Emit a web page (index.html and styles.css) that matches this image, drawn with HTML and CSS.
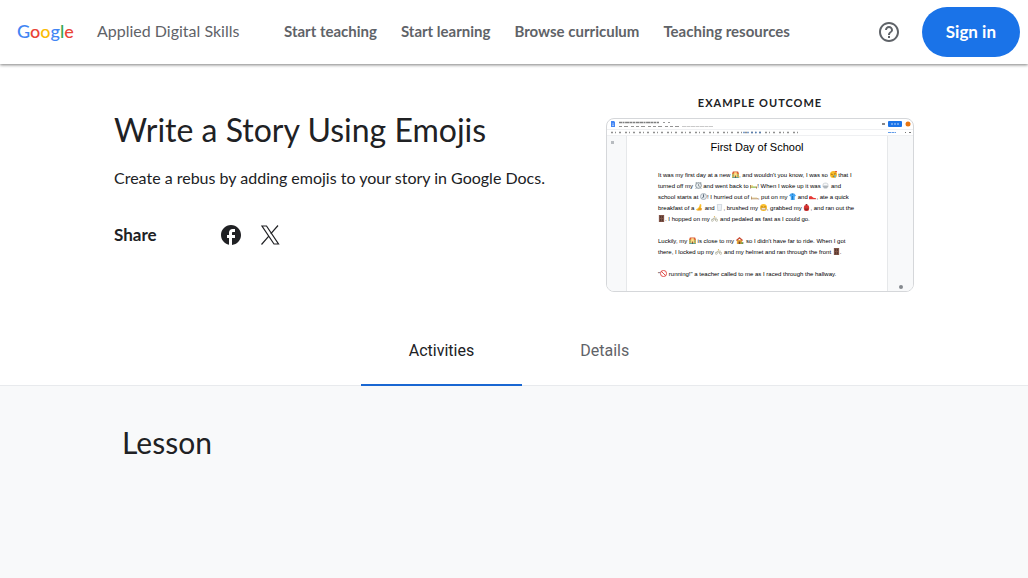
FILE: index.html
```html
<!DOCTYPE html>
<html lang="en">
<head>
<meta charset="utf-8">
<meta name="viewport" content="width=device-width, initial-scale=1">
<title>Write a Story Using Emojis - Applied Digital Skills</title>
<link rel="stylesheet" href="styles.css">
</head>
<body>
<svg class="sprite" aria-hidden="true">
  <symbol id="school" viewBox="0 0 16 16"><path fill="#f3b63f" d="M0 5h16v11H0z"/><path fill="#d95b35" d="M2 1h12l2 5H0z"/><path fill="#ffe08a" d="M5 3h6v13H5z"/><path fill="#59a7a0" d="M1 8h3v3H1zM12 8h3v3h-3zM1 13h14v3H1z"/><path fill="#8d4c2c" d="M7 10h2v6H7z"/></symbol>
  <symbol id="sleepy" viewBox="0 0 16 16"><circle cx="8" cy="8" r="8" fill="#f8bd28"/><path stroke="#6b421c" fill="none" stroke-width="1.5" d="M2 7l4 1M9 7l4-1M6 12h5"/><path fill="#55b5ee" d="M10 9h3v6h-3z"/><path fill="#e45b35" d="M11 0h5v3h-5z"/></symbol>
  <symbol id="alarm" viewBox="0 0 16 16"><circle cx="8" cy="8" r="6.500" fill="#eceff1" stroke="#78868e" stroke-width="2"/><path d="M8 4v5l3 1M1 3l3-3M15 3l-3-3M3 14l-2 2M13 14l2 2" fill="none" stroke="#66737a" stroke-width="1.500"/></symbol>
  <symbol id="bed" viewBox="0 0 16 16"><path fill="#a16c42" d="M0 7h2v8H0zM14 10h2v5h-2z"/><path fill="#91b84b" d="M2 10h12v3H2z"/><path fill="#e8c64b" d="M2 8h5v2H2z"/></symbol>
  <symbol id="cloud" viewBox="0 0 16 16"><circle cx="8" cy="8" r="7" fill="#d6dade"/><path fill="#a4abb1" d="M2 9h12v2H2zM4 12h8v2H4z"/><path fill="#fafafa" d="M4 4h8v3H4z"/></symbol>
  <symbol id="clock" viewBox="0 0 16 16"><circle cx="8" cy="8" r="7" fill="#e3e8ed" stroke="#8d9aa6" stroke-width="1.500"/><path d="M8 3v6l-3 3" fill="none" stroke="#465767" stroke-width="2"/></symbol>
  <symbol id="couch" viewBox="0 0 16 16"><path fill="#b79064" d="M0 8h2v7H0zM2 12h14v2H2z"/><path fill="#e5d39c" d="M2 10h12v2H2z"/></symbol>
  <symbol id="shirt" viewBox="0 0 16 16"><path fill="#42a5f5" d="M4 1h8l4 5-3 2v8H4V8L0 6z"/><path fill="#1976b9" d="M6 1h4L8 5zM7 7h2v8H7z"/></symbol>
  <symbol id="shoe" viewBox="0 0 16 16"><path fill="#e53935" d="M0 8l5-1 5 4 6 1v2H0z"/><path fill="#eee" d="M0 14h16v1H0z"/></symbol>
  <symbol id="banana" viewBox="0 0 16 16"><path fill="#fbc02d" d="M9 0l3 1c1 7-2 13-10 14l-2-3c6-2 8-6 9-12z"/><path fill="#e69b22" d="M8 8l6 2-2 5H3z"/></symbol>
  <symbol id="milk" viewBox="0 0 16 16"><path fill="#edf1f5" stroke="#a6b2bd" d="M3 1h10l-1 14H4z"/></symbol>
  <symbol id="grin" viewBox="0 0 16 16"><circle cx="8" cy="8" r="8" fill="#fbc02d"/><path fill="#fff" stroke="#9a672a" d="M3 9h10v4H3z"/><path stroke="#8a521e" stroke-width="1.500" d="M3 6h3M10 6h3"/></symbol>
  <symbol id="bag" viewBox="0 0 16 16"><rect x="2" y="2" width="12" height="14" rx="5" fill="#d83232"/><path fill="#972525" d="M4 9h8v5H4zM6 0h4v3H6z"/><path fill="#f16b55" d="M5 10h6v1H5z"/></symbol>
  <symbol id="door" viewBox="0 0 16 16"><path fill="#805447" d="M2 0h12v16H2z"/><path fill="#4e342e" d="M5 2h2v5H5zM9 2h2v5H9zM5 9h2v5H5zM9 9h2v5H9z"/></symbol>
  <symbol id="bike" viewBox="0 0 16 16"><g fill="none" stroke="#9b9b83" stroke-width="1.300"><circle cx="3" cy="12" r="2.500"/><circle cx="13" cy="12" r="2.500"/><path d="M3 12l3-5 4 5 2-6M6 7h5"/></g><circle cx="8" cy="4" r="1.500" fill="#dfb85d"/></symbol>
  <symbol id="house" viewBox="0 0 16 16"><path fill="#e6a93c" d="M2 7h12v9H2z"/><path fill="#ca4c32" d="M8 0l8 7-2 2-6-5-6 5-2-2z"/><path fill="#7d4930" d="M6 10h4v6H6z"/><path fill="#69a04b" d="M12 12h4v4h-4z"/></symbol>
  <symbol id="no" viewBox="0 0 16 16"><path d="M3 3l10 10M15 8A7 7 0 1 1 1 8a7 7 0 0 1 14 0" fill="none" stroke="#df3c36" stroke-width="2"/></symbol>
</svg>

<header class="topbar">
  <a class="logo" href="#" aria-label="Google"><span class="blue">G</span><span class="red">o</span><span class="yellow">o</span><span class="blue">g</span><span class="green">l</span><span class="red">e</span></a>
  <a class="product" href="#">Applied Digital Skills</a>
  <nav class="nav" aria-label="Main">
    <a href="#">Start teaching</a>
    <a href="#">Start learning</a>
    <a href="#">Browse curriculum</a>
    <a href="#">Teaching resources</a>
  </nav>
  <button class="help" aria-label="Help">
    <svg viewBox="0 0 24 24" width="24" height="24" fill="currentColor"><path d="M11 18h2v-2h-2v2zm1-16C6.480 2 2 6.480 2 12s4.480 10 10 10 10-4.480 10-10S17.520 2 12 2zm0 18c-4.410 0-8-3.590-8-8s3.590-8 8-8 8 3.590 8 8-3.590 8-8 8zm0-14c-2.210 0-4 1.790-4 4h2c0-1.100.9-2 2-2s2 .9 2 2c0 2-3 1.750-3 5h2c0-2.250 3-2.500 3-5 0-2.210-1.790-4-4-4z"/></svg>
  </button>
  <button class="signin">Sign in</button>
</header>

<main>
  <section class="hero">
    <div class="intro">
      <h1>Write a Story Using Emojis</h1>
      <p class="summary">Create a rebus by adding emojis to your story in Google Docs.</p>
      <div class="share">
        <span class="share-label">Share</span>
        <a href="#" aria-label="Share on Facebook"><svg viewBox="0 0 24 24" width="24" height="24"><path fill="currentColor" d="M22 12c0-5.520-4.480-10-10-10S2 6.480 2 12c0 4.840 3.440 8.870 8 9.800V15H8v-3h2V9.500C10 7.570 11.570 6 13.500 6H16v3h-2c-.55 0-1 .45-1 1v2h3v3h-3v6.950c5.050-.5 9-4.760 9-9.950z"/></svg></a>
        <a href="#" aria-label="Share on X"><svg viewBox="0 0 24 24" width="24" height="24"><path fill="none" stroke="currentColor" stroke-width="1.200" d="M4 3h4.500L20.500 21H16zM20 2.500l-7.300 8.300M10.800 13.100L3.500 21.500"/></svg></a>
      </div>
    </div>
    <figure class="outcome">
      <figcaption>EXAMPLE OUTCOME</figcaption>
      <div class="preview">
        <svg class="docbar" viewBox="0 0 306 17" aria-hidden="true">
          <path fill="#4285f4" d="M4 2h3l1 1v5H4z"/><path stroke="#fff" stroke-width=".5" d="M5 5h2M5 6.500h2"/>
          <path stroke="#555" stroke-width="1.500" stroke-dasharray="3 .5 2 .6 4 .4" opacity=".75" d="M12 3.500h40"/><path stroke="#999" stroke-dasharray="2 3" d="M56 3.500h8"/>
          <path stroke="#666" stroke-width="1" stroke-dasharray="3 2 4 3 3 2" opacity=".7" d="M12 7.500h61"/><path stroke="#bbb" stroke-width=".8" stroke-dasharray="4 .5" d="M75 7.500h31"/>
          <path stroke="#555" stroke-width="1.300" stroke-dasharray="2 2 1 3 2 4" opacity=".65" d="M4 13.500h187"/>
          <path stroke="#4779b8" stroke-width="1.500" stroke-dasharray="2 2" opacity=".7" d="M136 13.500h20"/>
          <path fill="#888" d="M275 4h3v2h-3z"/><rect x="281" y="2" width="14" height="6" rx="1" fill="#1a73e8"/><path stroke="#b8d4f7" stroke-dasharray="2 1" d="M284 5h8"/><circle cx="301" cy="5" r="2.500" fill="#e87510"/>
          <path stroke="#629ce8" stroke-dasharray="3 .5" d="M281 13.500h8"/><path stroke="#777" d="M298 13.500h1M302 13.500h2"/>
          <path stroke="#e4e6ea" stroke-width=".6" d="M0 10.500h306M0 16.500h306"/>
        </svg>
        <div class="doc">
          <div class="rail"><span class="outline-mark"></span></div>
          <div class="page">
            <h2>First Day of School</h2>
            <p>It was my first day at a new <svg><use href="#school"/></svg>, and wouldn't you know, I was so <svg><use href="#sleepy"/></svg> that I<br>
            turned off my <svg><use href="#alarm"/></svg> and went back to <svg><use href="#bed"/></svg>! When I woke up it was <svg><use href="#cloud"/></svg> and<br>
            school starts at <svg><use href="#clock"/></svg>! I hurried out of <svg><use href="#couch"/></svg>, put on my <svg><use href="#shirt"/></svg> and <svg><use href="#shoe"/></svg>, ate a quick<br>
            breakfast of a <svg><use href="#banana"/></svg> and <svg><use href="#milk"/></svg>, brushed my <svg><use href="#grin"/></svg>, grabbed my <svg><use href="#bag"/></svg>, and ran out the<br>
            <svg><use href="#door"/></svg>. I hopped on my <svg><use href="#bike"/></svg> and pedaled as fast as I could go.</p>
            <p>Luckily, my <svg><use href="#school"/></svg> is close to my <svg><use href="#house"/></svg>, so I didn't have far to ride. When I got<br>
            there, I locked up my <svg><use href="#bike"/></svg> and my helmet and ran through the front <svg><use href="#door"/></svg>.</p>
            <p>"<svg><use href="#no"/></svg> running!" a teacher called to me as I raced through the hallway.</p>
          </div>
          <div class="rail rail-end"><span class="explore"></span></div>
        </div>
      </div>
    </figure>
  </section>

  <div class="tabs" role="tablist">
    <button class="tab active" role="tab" aria-selected="true">Activities</button>
    <button class="tab" role="tab" aria-selected="false">Details</button>
  </div>

  <section class="lesson">
    <h2>Lesson</h2>
  </section>
</main>
</body>
</html>
```
FILE: styles.css
```css
* { box-sizing: border-box; }
body {
  margin: 0;
  min-height: 100vh;
  display: flex;
  flex-direction: column;
  background: #fff;
  color: #202124;
  font-family: Lato, "Open Sans", sans-serif;
}
h1, h2, p, figure { margin: 0; }
a { color: inherit; text-decoration: none; }
button { border: 0; background: none; padding: 0; font: inherit; color: inherit; cursor: pointer; }
.sprite { display: none; }

.topbar {
  display: flex;
  align-items: center;
  height: 64px;
  padding: 0 8px 0 17px;
  color: #5f6368;
  box-shadow: 0 1px 3px rgba(0, 0, 0, .5);
}
.logo, .product, .nav { padding-bottom: 2px; line-height: 24px; }
.logo { width: 80px; font-size: 18px; font-weight: 500; }
.blue { color: #4285f4; }
.red { color: #ea4335; }
.yellow { color: #fbbc04; }
.green { color: #34a853; }
.product { width: 187px; font-size: 16px; white-space: nowrap; }
.nav { display: flex; gap: 24px; flex: 1; font-size: 15px; font-weight: 700; white-space: nowrap; }
.help { width: 24px; height: 24px; margin-right: 21px; }
.help svg, .share svg { display: block; }
.signin {
  padding: 0 24px 2px;
  height: 50px;
  border-radius: 25px;
  background: #1a73e8;
  color: #fff;
  font-size: 17px;
  font-weight: 700;
}

main { flex: 1; display: flex; flex-direction: column; }
.hero {
  width: 100%;
  max-width: 800px;
  margin: 0 auto;
  padding: 32px 0 24px;
  display: flex;
  justify-content: space-between;
}
.intro { padding-top: 14px; }
.intro h1 { font-size: 32px; line-height: 40px; font-weight: 400; }
.summary { margin-top: 16px; font-size: 16px; line-height: 24px; }
.share { display: flex; align-items: center; gap: 15px; margin-top: 33px; }
.share-label { width: 90px; font-size: 17px; line-height: 24px; font-weight: 700; }

.outcome { width: 308px; }
.outcome figcaption { font-size: 11px; line-height: 14px; font-weight: 700; text-align: center; letter-spacing: 1px; }
.preview {
  margin-top: 8px;
  border: 1px solid #d5d7da;
  border-radius: 8px;
  overflow: hidden;
  font-family: "Liberation Sans", Arial, sans-serif;
  color: #000;
}
.docbar { display: block; width: 100%; }
.doc { display: flex; height: 155px; }
.rail { width: 20px; background: #f8f9fa; border-right: 1px solid #e6e8ea; padding: 5px 4px; }
.rail-end { width: 26px; border: 0; border-left: 1px solid #e6e8ea; display: flex; align-items: flex-end; justify-content: center; padding: 2px; }
.outline-mark { display: block; width: 3px; height: 3px; background: #b8bcc0; }
.explore { width: 4px; height: 4px; border-radius: 2px; background: #85898e; }
.page { flex: 1; padding: 3px 0 0 31px; white-space: nowrap; }
.page h2 { margin: 0 0 15px -31px; font-size: 11px; line-height: 16px; font-weight: 400; text-align: center; }
.page p { margin-bottom: 11px; font-size: 6px; line-height: 11px; }
.page svg { width: 7px; height: 7px; vertical-align: -1px; }

.tabs { display: flex; justify-content: center; border-bottom: 1px solid #e8eaed; }
.tab {
  margin-left: 10px;
  padding: 0 48px;
  height: 70px;
  margin-bottom: -1px;
  border-bottom: 2px solid transparent;
  font-family: Roboto, sans-serif;
  font-size: 16px;
  color: #5f6368;
}
.tab.active { color: #202124; border-color: #1967d2; }

.lesson { flex: 1; background: #f8f9fa; }
.lesson h2 { width: 100%; max-width: 784px; margin: 0 auto; padding-top: 36px; font-size: 30px; line-height: 40px; font-weight: 400; }
```
